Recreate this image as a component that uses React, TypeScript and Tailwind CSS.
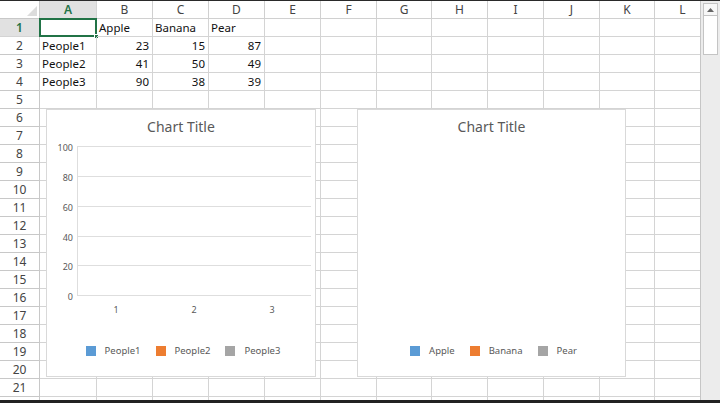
import React from 'react'

const COLS = ['A', 'B', 'C', 'D', 'E', 'F', 'G', 'H', 'I', 'J', 'K', 'L']

type Cell = { v: string; num?: boolean }

const DATA: Record<number, Cell[]> = {
  1: [{ v: '' }, { v: 'Apple' }, { v: 'Banana' }, { v: 'Pear' }],
  2: [{ v: 'People1' }, { v: '23', num: true }, { v: '15', num: true }, { v: '87', num: true }],
  3: [{ v: 'People2' }, { v: '41', num: true }, { v: '50', num: true }, { v: '49', num: true }],
  4: [{ v: 'People3' }, { v: '90', num: true }, { v: '38', num: true }, { v: '39', num: true }],
}

const ROWS = Array.from({ length: 22 }, (_, i) => i + 1)

function Legend({ items }: { items: { label: string; color: string }[] }) {
  return (
    <div className="mt-[9px] flex h-[12px] items-center justify-center gap-[15px] pl-[4px]">
      {items.map((it) => (
        <div key={it.label} className="flex items-center gap-[9px]">
          <span className={`h-[10px] w-[10px] ${it.color}`} />
          <span className="text-[9.5px] leading-[12px] text-[#595959]">{it.label}</span>
        </div>
      ))}
    </div>
  )
}

function BarChart() {
  const grid = [
    { y: 10, label: '100' },
    { y: 40, label: '80' },
    { y: 70, label: '60' },
    { y: 100, label: '40' },
    { y: 129, label: '20' },
    { y: 159, label: '0' },
  ]
  return (
    <div className="absolute left-[46px] top-[108px] flex h-[268px] w-[270px] flex-col border border-[#d9d9d9] bg-white">
      <div className="pt-[8px] text-center text-[14px] leading-[18px] text-[#595959]">Chart Title</div>
      <svg width="268" height="200" className="block">
        <line x1="30.5" y1="10" x2="30.5" y2="159" stroke="#dedede" />
        {grid.map((g) => (
          <g key={g.label}>
            <line x1="30" y1={g.y + 0.5} x2="264" y2={g.y + 0.5} stroke="#dedede" />
            <text x="26" y={g.y + 5} textAnchor="end" fontSize="9" fill="#595959" fontFamily="Noto Sans, sans-serif">
              {g.label}
            </text>
          </g>
        ))}
        {['1', '2', '3'].map((l, i) => (
          <text key={l} x={69 + i * 78} y="177" textAnchor="middle" fontSize="9" fill="#595959" fontFamily="Noto Sans, sans-serif">
            {l}
          </text>
        ))}
      </svg>
      <Legend
        items={[
          { label: 'People1', color: 'bg-[#5b9bd5]' },
          { label: 'People2', color: 'bg-[#ed7d31]' },
          { label: 'People3', color: 'bg-[#a5a5a5]' },
        ]}
      />
    </div>
  )
}

function EmptyChart() {
  return (
    <div className="absolute left-[357px] top-[108px] flex h-[268px] w-[269px] flex-col border border-[#d9d9d9] bg-white">
      <div className="pt-[8px] text-center text-[14px] leading-[18px] text-[#595959]">Chart Title</div>
      <div className="h-[200px]" />
      <Legend
        items={[
          { label: 'Apple', color: 'bg-[#5b9bd5]' },
          { label: 'Banana', color: 'bg-[#ed7d31]' },
          { label: 'Pear', color: 'bg-[#a5a5a5]' },
        ]}
      />
    </div>
  )
}

export default function App() {
  return (
    <div className="flex h-[403px] w-[720px] flex-col overflow-hidden bg-white font-['Noto_Sans',sans-serif]">
      <div className="h-px shrink-0 bg-[#2a2a2a]" />
      <div className="flex min-h-0 flex-1">
        <div className="relative w-[700px] shrink-0 overflow-hidden">
          <div className="grid grid-cols-[40px_57px_56px_56px_56px_56px_56px_55px_56px_56px_56px_55px_56px] auto-rows-[18px]">
            {/* header row */}
            <div className="relative border-b border-r border-[#c8c8c8] bg-white">
              <svg width="40" height="17" className="absolute inset-0">
                <polygon points="27,15 37,15 37,5" fill="#dcdcdc" />
              </svg>
            </div>
            {COLS.map((c) => (
              <div
                key={c}
                className={`flex items-center justify-center border-b border-r text-[12px] leading-none ${
                  c === 'A'
                    ? 'border-b-[#217346] border-r-[#d4d4d4] bg-[#e1e1e1] font-semibold text-[#217346]'
                    : 'border-[#d0d0d0] bg-white text-[#444]'
                }`}
              >
                {c}
              </div>
            ))}
            {ROWS.map((r) => (
              <React.Fragment key={r}>
                <div
                  className={`flex items-center justify-center border-b border-r text-[12px] leading-none ${
                    r === 1
                      ? 'border-b-[#d4d4d4] border-r-[#217346] bg-[#e1e1e1] font-semibold text-[#217346]'
                      : 'border-[#c8c8c8] bg-white text-[#444]'
                  }`}
                >
                  {r}
                </div>
                {COLS.map((c, ci) => {
                  const cell = DATA[r]?.[ci]
                  const selected = r === 1 && ci === 0
                  return (
                    <div
                      key={c}
                      className={`relative flex items-center overflow-visible whitespace-nowrap border-b border-r border-[#d4d4d4] px-[2px] text-[11.5px] leading-none text-[#111] ${
                        cell?.num ? 'justify-end pr-[3px]' : 'justify-start'
                      }`}
                    >
                      {cell?.v}
                      {selected && (
                        <>
                          <span className="pointer-events-none absolute -left-px -top-px bottom-[-1px] right-[-1px] border-2 border-[#217346]" />
                          <span className="absolute bottom-[-3px] right-[-3px] h-[5px] w-[5px] border border-white bg-[#217346]" />
                        </>
                      )}
                    </div>
                  )
                })}
              </React.Fragment>
            ))}
          </div>
          <BarChart />
          <EmptyChart />
        </div>
        <div className="w-[20px] shrink-0 border-l border-[#c6c6c6] bg-[#ececec]">
          <div className="ml-[2px] mt-[2px] w-[15px]">
            <div className="flex h-[13px] items-center justify-center border border-[#c4c4c4] bg-[#f7f7f7]">
              <svg width="7" height="4">
                <polygon points="0,4 7,4 3.5,0" fill="#666" />
              </svg>
            </div>
            <div className="h-[39px] border border-t-0 border-[#c4c4c4] bg-white" />
          </div>
        </div>
      </div>
      <div className="h-[3px] shrink-0 bg-[#222]" />
    </div>
  )
}
